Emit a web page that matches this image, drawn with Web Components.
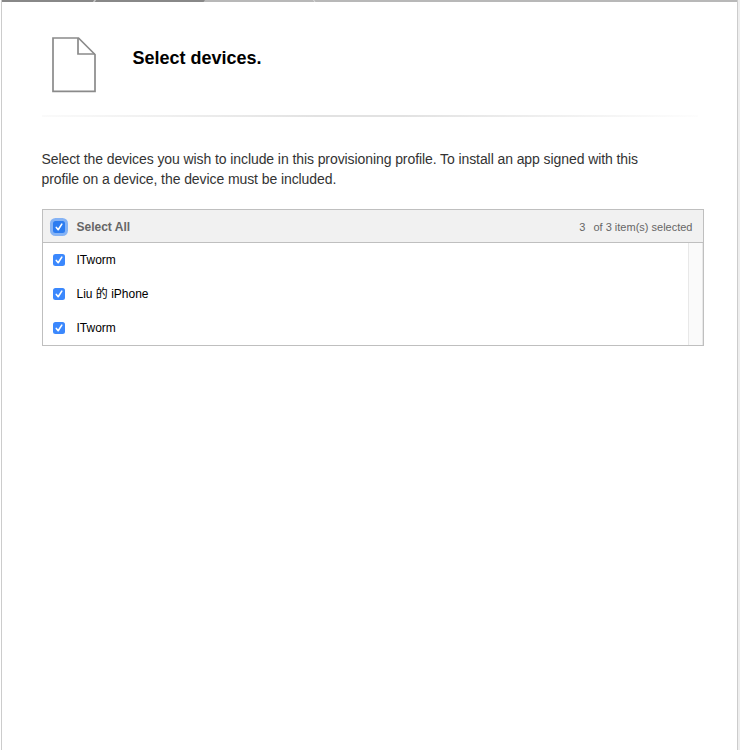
<!DOCTYPE html>
<html lang="en">
<head>
<meta charset="utf-8">
<title>Select devices</title>
<style>
html, body { margin: 0; height: 100%; background: #eee; overflow: hidden; }
body { font-family: "Liberation Sans", "Noto Sans CJK SC", sans-serif; color: #333; }
</style>
</head>
<body>
<profile-page>
  <step-bar slot="steps"></step-bar>
  <page-heading>Select devices.</page-heading>
  <intro-text><span>Select the devices you wish to include in this provisioning profile. To install an app signed with this</span><span slot="second">profile on a device, the device must be included.</span></intro-text>
  <device-list>
    <device-row>ITworm</device-row>
    <device-row>Liu 的 iPhone</device-row>
    <device-row>ITworm</device-row>
  </device-list>
</profile-page>
<script>
function define(name, html) {
  const template = document.createElement('template');
  template.innerHTML = html;
  customElements.define(name, class extends HTMLElement {
    constructor() {
      super();
      this.attachShadow({ mode: 'open' }).append(template.content.cloneNode(true));
    }
  });
}

define('profile-page', `
<style>
:host { display: block; box-sizing: border-box; width: 740px; height: 750px; padding: 0 2px 0 1px; background: linear-gradient(90deg, #fff 1px, #eee 1px); }
.sheet { box-sizing: border-box; height: 100%; background: #fff; border: solid #ccc; border-width: 0 1px; }
.content { padding: 35px 33px 0 40px; }
</style>
<div class="sheet"><slot name="steps"></slot><div class="content"><slot></slot></div></div>`);

define('step-bar', `
<style>
:host { display: block; height: 2px; }
svg { display: block; }
</style>
<svg width="735" height="2" viewBox="0 0 735 2">
  <path fill="#b8b8b8" d="M0 0H735V2H0z"/>
  <path fill="#888" d="M0 0H203L201.500 2H0z"/>
  <path stroke="#c8c8c8" stroke-width="1.500" d="M93.500 0L91.500 2"/>
  <path stroke="#ddd" d="M311.500 0L313 2"/>
</svg>`);

define('page-heading', `
<style>
:host { display: block; }
.row { display: flex; align-items: flex-start; height: 78px; }
svg { flex: none; margin-left: 10px; }
h1 { margin: 10px 0 0 35.500px; font: bold 18px/22px "Liberation Sans", sans-serif; color: #000; }
.rule { width: 656px; height: 2px; background: linear-gradient(90deg, #fafafa, #e2e2e2 42%, #e2e2e2 55%, #fdfdfd); }
</style>
<div class="row">
  <svg width="45" height="56" viewBox="0 0 45 56" fill="none" stroke="#8a8a8a" stroke-width="1.700">
    <path fill="#fff" d="M1 1H26.500L43 17.500V54.300H1z"/><path d="M26 1V17H43"/>
  </svg>
  <h1><slot></slot></h1>
</div>
<div class="rule"></div>`);

define('intro-text', `
<style>
:host { display: block; margin: 32px 0 0 -0.500px; font-size: 14px; line-height: 20px; color: #333; white-space: nowrap; }
div { letter-spacing: -0.085px; }
</style>
<div><slot></slot></div><div><slot name="second"></slot></div>`);

define('check-mark', `
<style>
:host { display: block; width: 12px; height: 12px; border-radius: 2.500px; background: #3b88fd; }
:host([focused]) { background: #2c7cf0; box-shadow: 0 0 0 3px #85b3f5; }
svg { display: block; }
</style>
<svg width="12" height="12" viewBox="0 0 12 12"><path d="M3.300 6.400L5.200 8.700L8.800 3.100" fill="none" stroke="#fff" stroke-width="1.600" stroke-linecap="round" stroke-linejoin="round"/></svg>`);

define('device-row', `
<style>
:host { display: flex; align-items: center; height: 34px; padding-left: 10px; gap: 11.500px; font-size: 12px; line-height: 16px; color: #000; }
</style>
<check-mark></check-mark><span><slot></slot></span>`);

define('device-list', `
<style>
:host { display: block; box-sizing: border-box; width: 662px; height: 137px; margin-top: 20px; border: 1px solid #bfbfbf; }
header { display: flex; align-items: center; height: 30px; padding: 2px 10.500px 0 10px; background: #f1f1f1; border-bottom: 1px solid #bfbfbf; color: #666; }
strong { margin-left: 11.500px; font-size: 12px; }
.count { margin-left: auto; display: flex; gap: 8px; font-size: 11px; }
.body { display: flex; height: 102px; }
.rows { flex: 1; }
.track { box-sizing: border-box; width: 15px; background: #fafafa; border: solid #e8e8e8; border-width: 0 1px; }
</style>
<header><check-mark focused></check-mark><strong>Select All</strong><span class="count"><span>3</span><span>of 3 item(s) selected</span></span></header>
<div class="body"><div class="rows"><slot></slot></div><div class="track"></div></div>`);
</script>
</body>
</html>
